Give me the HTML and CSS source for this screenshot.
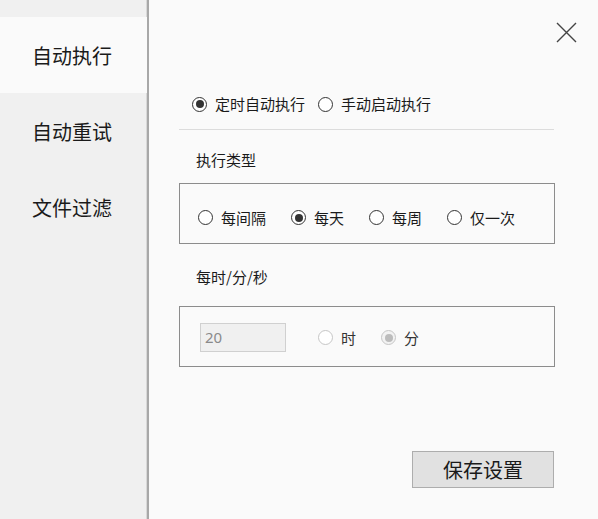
FILE: index.html
```html
<!DOCTYPE html>
<html lang="zh-CN">
<head>
<meta charset="utf-8">
<title>设置</title>
<link rel="stylesheet" href="styles.css">
</head>
<body>
<div class="window">
  <nav class="sidebar">
    <div class="tab active">自动执行</div>
    <div class="tab">自动重试</div>
    <div class="tab">文件过滤</div>
  </nav>
  <main class="main">
    <div class="top">
      <svg class="close" width="21" height="21" viewBox="0 0 21 21"><path d="M1 1L20 20M20 1L1 20" stroke="#444" stroke-width="1.4" fill="none"/></svg>
    </div>
    <div class="content">
      <div class="mode-row">
        <label class="radio"><span class="dot checked"></span>定时自动执行</label>
        <label class="radio"><span class="dot"></span>手动启动执行</label>
      </div>
      <div class="sep"></div>
      <div class="label">执行类型</div>
      <div class="box type-box">
        <label class="radio"><span class="dot"></span>每间隔</label>
        <label class="radio"><span class="dot checked"></span>每天</label>
        <label class="radio"><span class="dot"></span>每周</label>
        <label class="radio"><span class="dot"></span>仅一次</label>
      </div>
      <div class="label label2">每时/分/秒</div>
      <div class="box unit-box">
        <div class="input">20</div>
        <label class="radio disabled"><span class="dot"></span>时</label>
        <label class="radio disabled"><span class="dot checked"></span>分</label>
      </div>
      <div class="actions">
        <button class="save">保存设置</button>
      </div>
    </div>
  </main>
</div>
</body>
</html>
```
FILE: styles.css
```css
* { box-sizing: border-box; }
html, body {
  margin: 0;
  padding: 0;
  width: 598px;
  height: 519px;
  overflow: hidden;
  background: #fafafa;
  font-family: "Noto Sans CJK SC", "Noto Sans", sans-serif;
  color: #1a1a1a;
}
.window {
  display: flex;
  width: 598px;
  height: 519px;
}
.sidebar {
  width: 149px;
  flex: none;
  background: #f0f0f0;
  border-right: 2px solid #a8a8a8;
  box-shadow: inset -1px 0 0 #d8d8d8;
  padding-top: 17px;
}
.tab {
  height: 76px;
  display: flex;
  align-items: center;
  justify-content: center;
  font-size: 20px;
  color: #1a1a1a;
  padding-right: 3px;
}
.tab.active { background: #fafafa; }
.main {
  flex: 1;
  display: flex;
  flex-direction: column;
  background: #fafafa;
}
.top {
  display: flex;
  justify-content: flex-end;
  padding: 22px 21px 0 0;
  height: 43px;
}
.close { display: block; }
.content {
  width: 406px;
  padding-left: 30px;
  display: flex;
  flex-direction: column;
}
.radio {
  display: flex;
  align-items: center;
  gap: 8px;
  font-size: 15px;
  line-height: 20px;
  height: 20px;
  white-space: nowrap;
}
.dot {
  width: 15px;
  height: 15px;
  border-radius: 50%;
  border: 1px solid #333;
  background: #fff;
  display: flex;
  align-items: center;
  justify-content: center;
  flex: none;
}
.dot.checked::after {
  content: "";
  width: 8px;
  height: 8px;
  border-radius: 50%;
  background: #333;
}
.radio.disabled { color: #333; }
.radio.disabled .dot { border-color: #c6c6c6; background: #fff; }
.radio.disabled .dot.checked { background: #f2f2f2; }
.radio.disabled .dot.checked::after { background: #bcbcbc; }
.mode-row {
  display: flex;
  gap: 13px;
  margin-top: 51px;
  padding-left: 13px;
  height: 20px;
}
.sep {
  height: 1px;
  background: #dcdcdc;
  margin-top: 15px;
  width: 375px;
}
.label {
  font-size: 15px;
  line-height: 20px;
  height: 20px;
  margin-top: 20px;
  padding-left: 17px;
}
.label2 { margin-top: 23px; }
.box {
  width: 376px;
  height: 61px;
  border: 1px solid #8c8c8c;
  display: flex;
  align-items: center;
}
.type-box {
  margin-top: 13px;
  padding: 8px 0 0 18px;
  gap: 25px;
}
.unit-box {
  margin-top: 19px;
  padding: 2px 0 0 20px;
}
.input {
  width: 86px;
  height: 29px;
  background: #f0f0f0;
  border: 1px solid #d0d0d0;
  color: #8a8a8a;
  font-size: 15px;
  line-height: 27px;
  padding-left: 4px;
  font-family: "Noto Sans", "Noto Sans CJK SC", sans-serif;
  margin-right: 32px;
}
.unit-box .radio + .radio { margin-left: 25px; }
.actions {
  display: flex;
  justify-content: flex-end;
  margin-top: 84px;
  width: 375px;
}
.save {
  width: 142px;
  height: 37px;
  background: #e1e1e1;
  border: 1px solid #adadad;
  font-family: "Noto Sans CJK SC", "Noto Sans", sans-serif;
  font-size: 20px;
  color: #1a1a1a;
  padding: 0;
  line-height: 35px;
}
```
